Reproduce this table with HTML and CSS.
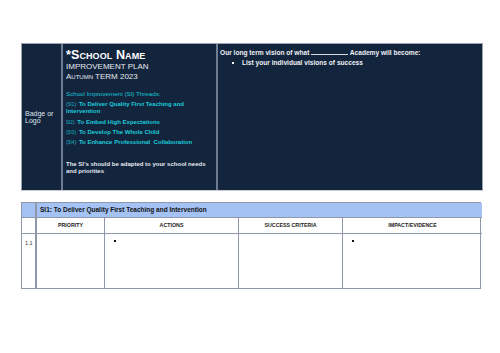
FILE: index.html
```html
<!DOCTYPE html>
<html>
<head>
<meta charset="utf-8">
<link rel="stylesheet" href="styles.css">
</head>
<body>
<div class="page">
  <div class="top">
    <div class="cell badge"><span>Badge or<br>Logo</span></div>
    <div class="cell school">
      <div class="name">*School Name</div>
      <div class="plan">IMPROVEMENT PLAN</div>
      <div class="term">Autumn TERM 2023</div>
      <div class="threads">School Improvement (SI) Threads:</div>
      <div class="si"><span class="tag">(SI1):</span> To Deliver Quality First Teaching and Intervention</div>
      <div class="si"><span class="tag">SI2):</span> To Embed High Expectations</div>
      <div class="si"><span class="tag">(SI3):</span> To Develop The Whole Child</div>
      <div class="si"><span class="tag">(SI4):</span> To Enhance Professional&nbsp; Collaboration</div>
      <div class="note">The SI’s should be adapted to your school needs and priorities</div>
    </div>
    <div class="cell vision">
      <div class="vhead">Our long term vision of what <span class="blank"></span> Academy will become:</div>
      <ul class="vlist"><li>List your individual visions of success</li></ul>
    </div>
  </div>

  <div class="plan-table">
    <div class="c first hdr-blank"></div>
    <div class="c hdr">SI1: To Deliver Quality First Teaching and Intervention</div>
    <div class="c first"></div>
    <div class="c colh">PRIORITY</div>
    <div class="c colh">ACTIONS</div>
    <div class="c colh">SUCCESS CRITERIA</div>
    <div class="c colh last">IMPACT/EVIDENCE</div>
    <div class="c first num">1.1</div>
    <div class="c body"></div>
    <div class="c body"><span class="dot"></span></div>
    <div class="c body"></div>
    <div class="c body last"><span class="dot"></span></div>
  </div>
</div>
</body>
</html>
```
FILE: styles.css
```css
html, body {
  margin: 0;
  padding: 0;
  background: #ffffff;
}
body {
  font-family: "Liberation Sans", Arial, sans-serif;
  width: 500px;
  height: 353px;
  overflow: hidden;
}
.page {
  padding: 43px 0 0 21px;
}
.top {
  display: grid;
  grid-template-columns: 41px 155px 266px;
  width: 462px;
  height: 148px;
  background: #13243d;
  box-sizing: border-box;
  border: 1px solid #9aa3b0;
  border-bottom: 1px solid #c9ced6;
}
.cell {
  box-sizing: border-box;
  color: #ffffff;
}
.badge {
  border-right: 2px solid #6f7c8f;
  display: flex;
  align-items: center;
  padding-left: 3px;
  font-size: 7px;
  line-height: 7px;
  color: #dfe3ea;
  padding-top: 0;
}
.school {
  border-right: 2px solid #6f7c8f;
  padding: 5px 3px 0 3px;
}
.name {
  font-size: 12.5px;
  font-weight: bold;
  font-variant: small-caps;
  line-height: 13px;
  letter-spacing: 0.1px;
}
.plan {
  font-size: 8px;
  line-height: 10px;
  color: #e8ebf0;
}
.term {
  font-size: 8px;
  line-height: 9px;
  font-variant: small-caps;
  color: #e8ebf0;
}
.threads {
  margin-top: 9px;
  font-size: 6.2px;
  line-height: 8px;
  color: #18c6d6;
}
.si {
  margin-top: 3px;
  font-size: 6px;
  line-height: 7.3px;
  font-weight: bold;
  color: #1ccbda;
}
.si + .si {
  margin-top: 3px;
}
.tag {
  font-size: 4.6px;
  font-weight: normal;
  color: #15b7c6;
}
.note {
  margin-top: 15px;
  font-size: 6px;
  line-height: 7px;
  font-weight: bold;
  color: #e6e9ee;
  padding-right: 4px;
}
.vision {
  padding: 5px 3px 0 2px;
}
.vhead {
  font-size: 6.6px;
  font-weight: bold;
  line-height: 8px;
  color: #eef0f4;
}
.blank {
  display: inline-block;
  width: 37px;
  border-bottom: 1px solid #d8dce3;
  vertical-align: baseline;
}
.vlist {
  margin: 2px 0 0 0;
  padding-left: 22px;
  font-size: 6.6px;
  line-height: 8px;
  font-weight: bold;
  color: #eef0f4;
  list-style: none;
}
.vlist li {
  position: relative;
}
.vlist li::before {
  content: "";
  position: absolute;
  left: -10px;
  top: 3px;
  width: 2px;
  height: 2px;
  background: #eef0f4;
}

.plan-table {
  margin-top: 11px;
  display: grid;
  grid-template-columns: 15px 68px 134px 104px 139px;
  grid-template-rows: 15px 16px 54px;
  width: 460px;
  box-sizing: border-box;
  border: 1px solid #8e98a8;
}
.c {
  box-sizing: border-box;
  border-right: 1px solid #8e98a8;
  border-bottom: 1px solid #8e98a8;
}
.c.last {
  border-right: none;
}
.first {
  border-right: 2px solid #8e98a8;
}
.num {
  border-bottom: none;
  font-size: 5.5px;
  color: #333;
  padding: 6px 0 0 3px;
}
.hdr-blank {
  background: #a4c2f4;
}
.hdr {
  grid-column: 2 / 6;
  background: #a4c2f4;
  border-right: none;
  font-size: 6.5px;
  font-weight: bold;
  color: #111;
  padding: 3px 0 0 3px;
  line-height: 8px;
}
.colh {
  font-size: 5.3px;
  font-weight: bold;
  color: #222;
  text-align: center;
  padding-top: 4px;
}
.body {
  border-bottom: none;
  position: relative;
}
.dot {
  position: absolute;
  left: 9px;
  top: 6px;
  width: 2px;
  height: 2px;
  background: #111;
}
```
